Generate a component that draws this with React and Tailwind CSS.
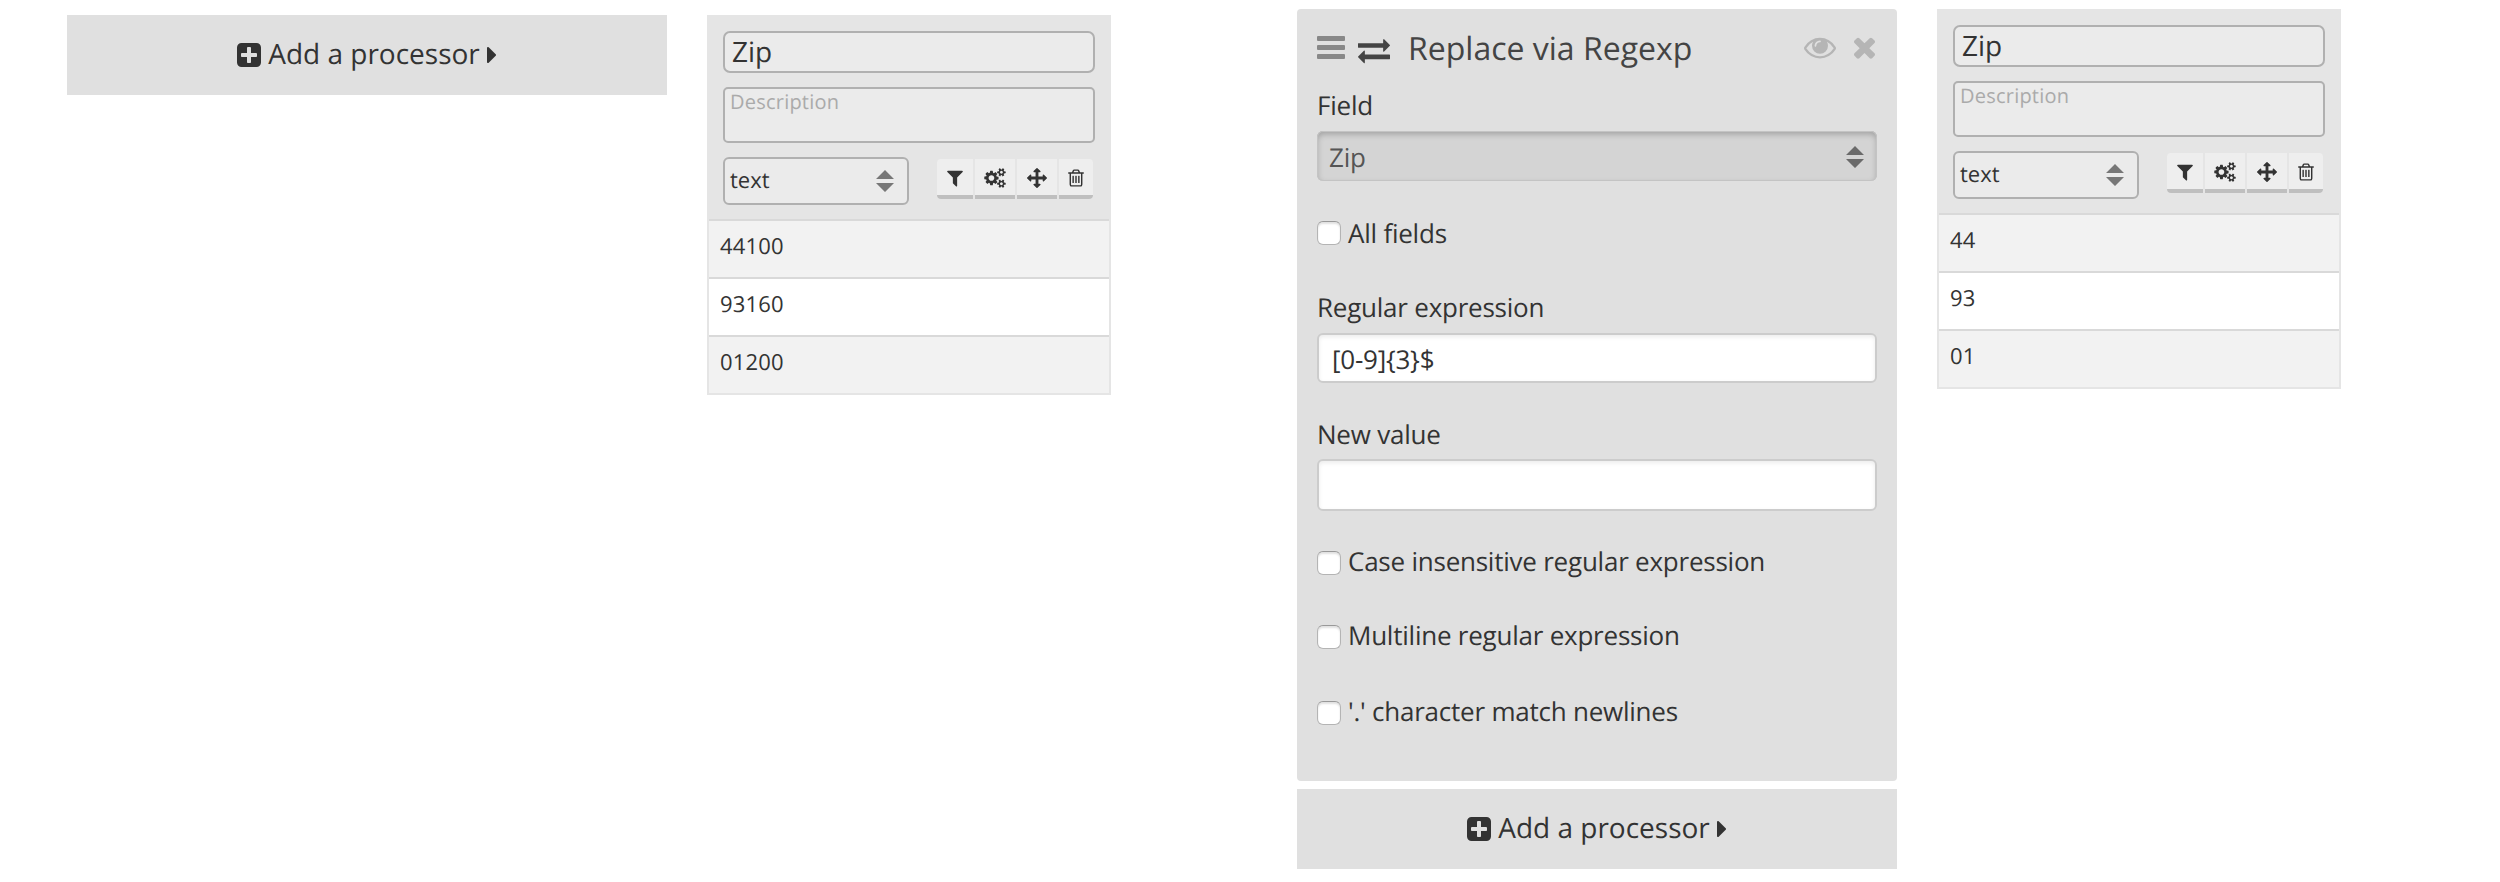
const ICONS = {
  plus: ["128 0 1536 1792", "M1408 960v-128q0-26-19-45t-45-19h-320v-320q0-26-19-45t-45-19h-128q-26 0-45 19t-19 45v320h-320q-26 0-45 19t-19 45v128q0 26 19 45t45 19h320v320q0 26 19 45t45 19h128q26 0 45-19t19-45v-320h320q26 0 45-19t19-45zm256-544v960q0 119-84.5 203.5t-203.5 84.5h-960q-119 0-203.5-84.5t-84.5-203.5v-960q0-119 84.5-203.5t203.5-84.5h960q119 0 203.5 84.5t84.5 203.5z"],
  caret: ["576 0 576 1792", "M1152 896q0 26-19 45l-448 448q-19 19-45 19t-45-19-19-45v-896q0-26 19-45t45-19 45 19l448 448q19 19 19 45z"],
  filter: ["192 0 1408 1792", "M1595 295q17 41-14 70l-493 493v742q0 42-39 59-13 5-25 5-27 0-45-19l-256-256q-19-19-19-45v-486l-493-493q-31-29-14-70 17-39 59-39h1280q42 0 59 39z"],
  cogs: ["-64 0 1920 1792", "M832 896q0-106-75-181t-181-75-181 75-75 181 75 181 181 75 181-75 75-181zm768 512q0-52-38-90t-90-38-90 38-38 90q0 53 37.5 90.5t90.5 37.5 90.5-37.5 37.5-90.5zm0-1024q0-52-38-90t-90-38-90 38-38 90q0 53 37.5 90.5t90.5 37.5 90.5-37.5 37.5-90.5zm-384 421v185q0 10-7 19.5t-16 10.5l-155 24q-11 35-32 76 34 48 90 115 7 11 7 20 0 12-7 19-23 30-82.5 89.5t-78.5 59.5q-11 0-21-7l-115-90q-37 19-77 31-11 108-23 155-7 24-30 24h-186q-11 0-20-7.5t-10-17.5l-23-153q-34-10-75-31l-118 89q-7 7-20 7-11 0-21-8-144-133-144-160 0-9 7-19 10-14 41-53t47-61q-23-44-35-82l-152-24q-10-1-17-9.5t-7-19.5v-185q0-10 7-19.5t16-10.5l155-24q11-35 32-76-34-48-90-115-7-11-7-20 0-12 7-20 22-30 82-89t79-59q11 0 21 7l115 90q34-18 77-32 11-108 23-154 7-24 30-24h186q11 0 20 7.5t10 17.5l23 153q34 10 75 31l118-89q8-7 20-7 11 0 21 8 144 133 144 160 0 8-7 19-12 16-42 54t-45 60q23 48 34 82l152 23q10 2 17 10.5t7 19.5zm640 533v140q0 16-149 31-12 27-30 52 51 113 51 138 0 4-4 7-122 71-124 71-8 0-46-47t-52-68q-20 2-30 2t-30-2q-14 21-52 68t-46 47q-2 0-124-71-4-3-4-7 0-25 51-138-18-25-30-52-149-15-149-31v-140q0-16 149-31 13-29 30-52-51-113-51-138 0-4 4-7 4-2 35-20t59-34 30-16q8 0 46 46.5t52 67.5q20-2 30-2t30 2q51-71 92-112l6-2q4 0 124 70 4 3 4 7 0 25-51 138 17 23 30 52 149 15 149 31zm0-1024v140q0 16-149 31-12 27-30 52 51 113 51 138 0 4-4 7-122 71-124 71-8 0-46-47t-52-68q-20 2-30 2t-30-2q-14 21-52 68t-46 47q-2 0-124-71-4-3-4-7 0-25 51-138-18-25-30-52-149-15-149-31v-140q0-16 149-31 13-29 30-52-51-113-51-138 0-4 4-7 4-2 35-20t59-34 30-16q8 0 46 46.5t52 67.5q20-2 30-2t30 2q51-71 92-112l6-2q4 0 124 70 4 3 4 7 0 25-51 138 17 23 30 52 149 15 149 31z"],
  arrows: ["0 0 1792 1792", "M1792 896q0 26-19 45l-256 256q-19 19-45 19t-45-19-19-45v-128h-384v384h128q26 0 45 19t19 45-19 45l-256 256q-19 19-45 19t-45-19l-256-256q-19-19-19-45t19-45 45-19h128v-384h-384v128q0 26-19 45t-45 19-45-19l-256-256q-19-19-19-45t19-45l256-256q19-19 45-19t45 19 19 45v128h384v-384h-128q-26 0-45-19t-19-45 19-45l256-256q19-19 45-19t45 19l256 256q19 19 19 45t-19 45-45 19h-128v384h384v-128q0-26 19-45t45-19 45 19l256 256q19 19 19 45z"],
  trash: ["192 0 1408 1792", "M704 736v576q0 14-9 23t-23 9h-64q-14 0-23-9t-9-23v-576q0-14 9-23t23-9h64q14 0 23 9t9 23zm256 0v576q0 14-9 23t-23 9h-64q-14 0-23-9t-9-23v-576q0-14 9-23t23-9h64q14 0 23 9t9 23zm256 0v576q0 14-9 23t-23 9h-64q-14 0-23-9t-9-23v-576q0-14 9-23t23-9h64q14 0 23 9t9 23zm128 724v-948h-896v948q0 22 7 40.5t14.5 27 10.5 8.5h832q3 0 10.5-8.5t14.5-27 7-40.5zm-672-1076h448l-48-117q-7-9-17-11h-317q-10 2-17 11zm928 32v64q0 14-9 23t-23 9h-96v948q0 83-47 143.5t-113 60.5h-832q-66 0-113-58.5t-47-141.5v-952h-96q-14 0-23-9t-9-23v-64q0-14 9-23t23-9h309l70-167q15-37 54-63t79-26h320q40 0 79 26t54 63l70 167h309q14 0 23 9t9 23z"],
  exchange: ["0 0 1792 1792", "M1792 1184v192q0 13-9.5 22.5t-22.5 9.5h-1376v192q0 13-9.5 22.5t-22.5 9.5q-12 0-24-10l-319-320q-9-9-9-22 0-14 9-23l320-320q9-9 23-9 13 0 22.5 9.5t9.5 22.5v192h1376q13 0 22.5 9.5t9.5 22.5zm0-544q0 14-9 23l-320 320q-9 9-23 9-13 0-22.5-9.5t-9.5-22.5v-192h-1376q-13 0-22.5-9.5t-9.5-22.5v-192q0-13 9.5-22.5t22.5-9.5h1376v-192q0-14 9-23t23-9q12 0 24 10l319 319q9 9 9 23z"],
  eye: ["0 0 1792 1792", "M1664 960q-152-236-381-353 61 104 61 225 0 185-131.5 316.5t-316.5 131.5-316.5-131.5-131.5-316.5q0-121 61-225-229 117-381 353 133 205 333.5 326.5t434.5 121.5 434.5-121.5 333.5-326.5zm-720-384q0-20-14-34t-34-14q-125 0-214.5 89.5t-89.5 214.5q0 20 14 34t34 14 34-14 14-34q0-86 61-147t147-61q20 0 34-14t14-34zm848 384q0 34-20 69-140 230-376.5 368.5t-499.5 138.5-499.5-139-376.5-368q-20-35-20-69t20-69q140-229 376.5-368t499.5-139 499.5 139 376.5 368q20 35 20 69z"],
  times: ["302 0 1188 1792", "M1490 1322q0 40-28 68l-136 136q-28 28-68 28t-68-28l-294-294-294 294q-28 28-68 28t-68-28l-136-136q-28-28-28-68t28-68l294-294-294-294q-28-28-28-68t28-68l136-136q28-28 68-28t68 28l294 294 294-294q28-28 68-28t68 28l136 136q28 28 28 68t-28 68l-294 294 294 294q28 28 28 68z"],
};

function Icon({ name, className }) {
  const [viewBox, d] = ICONS[name];
  return (
    <svg viewBox={viewBox} fill="currentColor" className={`shrink-0 ${className}`}>
      <path d={d} />
    </svg>
  );
}

function SortArrows({ className }) {
  return (
    <svg viewBox="0 0 18 22" fill="currentColor" className={`h-[22px] w-[18px] shrink-0 ${className}`}>
      <path d="M9 0 18 9H0zM0 13h18L9 22z" />
    </svg>
  );
}

function AddProcessor() {
  return (
    <div className="flex h-20 w-[600px] items-center justify-center bg-[#e0e0e0] text-[28px] text-[#333]">
      <Icon name="plus" className="h-7 w-6" />
      <span className="mb-[2px] ml-[7px] whitespace-nowrap">Add a processor</span>
      <Icon name="caret" className="mr-px ml-[7px] h-7 w-[9px]" />
    </div>
  );
}

function Tool({ name, width, icon }) {
  return (
    <div className={`flex h-10 items-center justify-center border-b-4 border-[#bfbfbf] bg-[#eee] pt-[2px] ${width}`}>
      <Icon name={name} className={icon} />
    </div>
  );
}

function ColumnCard({ rows }) {
  return (
    <div className="w-[404px] border-2 border-[#e5e5e5] text-[#333]">
      <div className="h-[202px] bg-[#e5e5e5] px-[14px] pt-[14px]">
        <div className="flex h-[42px] items-center rounded-[7px] border-2 border-[#b0b0b0] bg-[#ebebeb] pl-[7px] text-[28px] leading-none">Zip</div>
        <div className="mt-[14px] h-14 rounded-[5px] border-2 border-[#b0b0b0] bg-[#ebebeb] pl-[5px] text-[20px] leading-[26px] tracking-[0.22px] text-[#aaa]">Description</div>
        <div className="mt-[14px] flex justify-between">
          <div className="flex h-12 w-[186px] items-center justify-between rounded-[6px] border-2 border-[#b0b0b0] bg-[#ebebeb] pr-[13px] pl-[5px] text-[22px]">
            <span className="mb-[2px]">text</span>
            <SortArrows className="text-[#777]" />
          </div>
          <div className="mt-[2px] mr-[2px] flex h-10 gap-[2px] overflow-hidden rounded-[4px]">
            <Tool name="filter" width="w-9" icon="h-5 w-4" />
            <Tool name="cogs" width="w-10" icon="h-5 w-[22px]" />
            <Tool name="arrows" width="w-10" icon="size-5" />
            <Tool name="trash" width="w-[34px]" icon="h-5 w-4" />
          </div>
        </div>
      </div>
      {rows.map((value) => (
        <div key={value} className="h-[58px] border-t-2 border-[#d9d9d9] pt-[10px] pl-[11px] text-[22px] leading-[30px] tracking-[0.2px] odd:bg-white even:bg-[#f2f2f2]">
          {value}
        </div>
      ))}
    </div>
  );
}

function Check({ label, className, boxOffset }) {
  return (
    <div className={`flex h-[30px] items-start ${className}`}>
      <span className={`size-6 shrink-0 rounded-[6px] border border-[#b4b4b4] border-t-[#999] bg-white shadow-[inset_0_2px_2px_rgba(0,0,0,0.12)] ${boxOffset}`} />
      <span className="ml-[7px] text-[26px] leading-[30px] whitespace-nowrap">{label}</span>
    </div>
  );
}

function ProcessorPanel() {
  return (
    <div className="h-[772px] w-[600px] rounded-[4px] bg-[#e0e0e0] px-5 text-[26px] leading-[36px] tracking-[-0.23px] text-[#333]">
      <div className="flex h-[78px] items-start text-[#444]">
        <div className="mt-[27px] flex w-7 flex-col gap-[4px] text-[#888]">
          <span className="h-[5px] rounded-[1px] bg-current" />
          <span className="h-[5px] rounded-[1px] bg-current" />
          <span className="h-[5px] rounded-[1px] bg-current" />
        </div>
        <Icon name="exchange" className="mt-[25px] ml-[13px] size-8" />
        <span className="mt-[21px] ml-[18px] text-[32px] leading-[37px] tracking-normal whitespace-nowrap">Replace via Regexp</span>
        <Icon name="eye" className="mt-[22px] ml-auto size-8 text-[#b5b5b5]" />
        <Icon name="times" className="mt-[22px] mr-[2px] ml-[18px] h-8 w-[21px] text-[#b5b5b5]" />
      </div>
      <div>Field</div>
      <div className="mt-[8px] flex h-[50px] items-center justify-between rounded-[6px] bg-[#d4d4d4] pt-[2px] pr-[13px] pl-[12px] text-[#555] shadow-[inset_0_0_0_1px_#c4c4c4,inset_0_3px_6px_rgba(0,0,0,0.25)]">
        <span>Zip</span>
        <SortArrows className="text-[#6a6a6a]" />
      </div>
      <Check label="All fields" className="mt-[37px]" boxOffset="mt-[3px]" />
      <div className="mt-[41px]">Regular expression</div>
      <div className="mt-[8px] flex h-[50px] items-center rounded-[6px] border-2 border-[#ccc] bg-white pt-[2px] pl-[13px] shadow-[inset_0_2px_4px_rgba(0,0,0,0.08)]">[0-9]&#123;3&#125;$</div>
      <div className="mt-[33px]">New value</div>
      <div className="mt-[7px] h-[52px] rounded-[6px] border-2 border-[#ccc] bg-white shadow-[inset_0_2px_4px_rgba(0,0,0,0.08)]" />
      <Check label="Case insensitive regular expression" className="mt-[35px]" boxOffset="mt-[5px]" />
      <Check label="Multiline regular expression" className="mt-[44px]" boxOffset="mt-[5px]" />
      <Check label="'.' character match newlines" className="mt-[46px]" boxOffset="mt-[5px]" />
    </div>
  );
}

export default function App() {
  return (
    <main className="flex h-[882px] w-[2500px] items-start overflow-hidden bg-white font-['Open_Sans','Noto_Sans',sans-serif] [text-rendering:geometricPrecision]">
      <section className="flex items-start gap-10 pt-[15px] pl-[67px]">
        <AddProcessor />
        <ColumnCard rows={["44100", "93160", "01200"]} />
      </section>
      <section className="flex items-start gap-10 pt-[9px] pl-[186px]">
        <div className="flex flex-col gap-2">
          <ProcessorPanel />
          <AddProcessor />
        </div>
        <ColumnCard rows={["44", "93", "01"]} />
      </section>
    </main>
  );
}
